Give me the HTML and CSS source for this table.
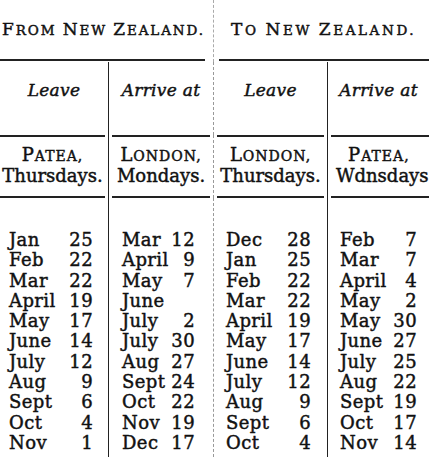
FILE: index.html
```html
<!DOCTYPE html>
<html>
<head>
<meta charset="utf-8">
<link rel="stylesheet" href="styles.css">
</head>
<body>
<div class="sheet">
  <div class="title title-left"><span class="title-text"><span class="cap">F</span>ROM <span class="cap">N</span>EW <span class="cap">Z</span>EALAND.</span></div>
  <div class="title title-right"><span class="title-text"><span class="cap">T</span>O <span class="cap">N</span>EW <span class="cap">Z</span>EALAND.</span></div>

  <div class="lv c1">Leave</div>
  <div class="lv c2 vl">Arrive at</div>
  <div class="lv c3 mid">Leave</div>
  <div class="lv c4 vl">Arrive at</div>

  <div class="hd c1"><div class="hd-in"><span class="sc"><span class="cap">P</span>ATEA,</span><span>Thursdays.</span></div></div>
  <div class="hd c2 vl"><div class="hd-in"><span class="sc"><span class="cap">L</span>ONDON,</span><span>Mondays.</span></div></div>
  <div class="hd c3 mid"><div class="hd-in"><span class="sc"><span class="cap">L</span>ONDON,</span><span>Thursdays.</span></div></div>
  <div class="hd c4 vl"><div class="hd-in"><span class="sc"><span class="cap">P</span>ATEA,</span><span class="wd">Wdnsdays</span></div></div>

  <div class="data c1 d1">
    <div class="row"><span>Jan</span><span>25</span></div>
    <div class="row"><span>Feb</span><span>22</span></div>
    <div class="row"><span>Mar</span><span>22</span></div>
    <div class="row"><span>April</span><span>19</span></div>
    <div class="row"><span>May</span><span>17</span></div>
    <div class="row"><span>June</span><span>14</span></div>
    <div class="row"><span>July</span><span>12</span></div>
    <div class="row"><span>Aug</span><span>9</span></div>
    <div class="row"><span>Sept</span><span>6</span></div>
    <div class="row"><span>Oct</span><span>4</span></div>
    <div class="row"><span>Nov</span><span>1</span></div>
  </div>
  <div class="data c2 vl d2">
    <div class="row"><span>Mar</span><span>12</span></div>
    <div class="row"><span>April</span><span>9</span></div>
    <div class="row"><span>May</span><span>7</span></div>
    <div class="row"><span>June</span><span></span></div>
    <div class="row"><span>July</span><span>2</span></div>
    <div class="row"><span>July</span><span>30</span></div>
    <div class="row"><span>Aug</span><span>27</span></div>
    <div class="row"><span>Sept</span><span>24</span></div>
    <div class="row"><span>Oct</span><span>22</span></div>
    <div class="row"><span>Nov</span><span>19</span></div>
    <div class="row"><span>Dec</span><span>17</span></div>
  </div>
  <div class="data c3 mid d3">
    <div class="row"><span>Dec</span><span>28</span></div>
    <div class="row"><span>Jan</span><span>25</span></div>
    <div class="row"><span>Feb</span><span>22</span></div>
    <div class="row"><span>Mar</span><span>22</span></div>
    <div class="row"><span>April</span><span>19</span></div>
    <div class="row"><span>May</span><span>17</span></div>
    <div class="row"><span>June</span><span>14</span></div>
    <div class="row"><span>July</span><span>12</span></div>
    <div class="row"><span>Aug</span><span>9</span></div>
    <div class="row"><span>Sept</span><span>6</span></div>
    <div class="row"><span>Oct</span><span>4</span></div>
  </div>
  <div class="data c4 vl d4">
    <div class="row"><span>Feb</span><span>7</span></div>
    <div class="row"><span>Mar</span><span>7</span></div>
    <div class="row"><span>April</span><span>4</span></div>
    <div class="row"><span>May</span><span>2</span></div>
    <div class="row"><span>May</span><span>30</span></div>
    <div class="row"><span>June</span><span>27</span></div>
    <div class="row"><span>July</span><span>25</span></div>
    <div class="row"><span>Aug</span><span>22</span></div>
    <div class="row"><span>Sept</span><span>19</span></div>
    <div class="row"><span>Oct</span><span>17</span></div>
    <div class="row"><span>Nov</span><span>14</span></div>
  </div>
</div>
</body>
</html>
```

FILE: styles.css
```css
html, body {
  margin: 0;
  padding: 0;
  background: #ffffff;
}
body {
  font-family: "DejaVu Serif", "Liberation Serif", serif;
  color: #111;
  font-size: 18px;
}
.sheet {
  width: 429px;
  height: 457px;
  overflow: hidden;
  display: grid;
  grid-template-columns: 108px 105px 114px 102px;
  grid-template-rows: 62px 73px 63px 1fr;
  -webkit-text-stroke: 0.45px #111;
}
.title {
  grid-column: span 2;
  display: flex;
  flex-direction: column;
  justify-content: flex-start;
}
.title-text {
  font-size: 13.5px;
  line-height: 18px;
  padding-top: 20px;
  height: 39px;
  box-sizing: content-box;
  border-bottom: 2px solid #222;
  white-space: nowrap;
}
.cap {
  font-size: 17px;
}
.title-left .title-text {
  margin-right: 8px;
  padding-left: 2px;
  letter-spacing: 1.9px;
}
.title-right {
  border-left: 1px dashed #aaa;
}
.title-right .title-text {
  margin-left: 5px;
  padding-left: 12px;
  letter-spacing: 2.6px;
}
.lv {
  font-style: italic;
  text-align: center;
  padding-top: 18px;
  font-size: 17px;
  letter-spacing: 0.3px;
}
.vl {
  border-left: 1px solid #222;
}
.mid {
  border-left: 1px dashed #999;
}
.hd {
  display: flex;
  align-items: stretch;
}
.hd-in {
  flex: 1;
  margin: 0 3px;
  border-top: 2px solid #222;
  border-bottom: 2px solid #222;
  display: flex;
  flex-direction: column;
  align-items: center;
  justify-content: center;
  line-height: 19px;
  padding-bottom: 4px;
  white-space: nowrap;
}
.c1 .hd-in { margin-left: 0; }
.c4 .hd-in { margin-right: 0; align-items: flex-start; padding-left: 5px; }
.sc {
  font-size: 14px;
  letter-spacing: 1px;
}
.sc .cap { font-size: 18px; }
.c4 .sc { padding-left: 12px; }
.data {
  padding-top: 32px;
  line-height: 20.3px;
  letter-spacing: 0.4px;
}
.row {
  display: flex;
  justify-content: space-between;
  white-space: nowrap;
}
.d1 { padding-left: 9px; padding-right: 15px; }
.d2 { padding-left: 13px; padding-right: 18px; }
.d3 { padding-left: 12px; padding-right: 16px; }
.d4 { padding-left: 12px; padding-right: 12px; }
```
